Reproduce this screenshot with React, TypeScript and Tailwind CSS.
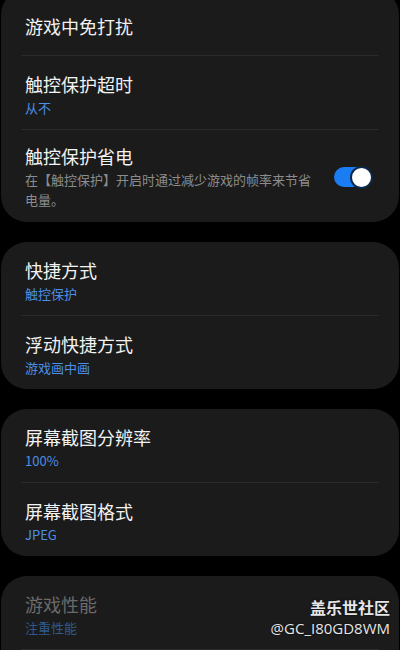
import React from 'react';

const font = { fontFamily: '"Noto Sans CJK SC", "Noto Sans", sans-serif' };

function Row({ title, sub, dim }: { title: string; sub: string; dim?: boolean }) {
  return (
    <div className="px-[24px] pt-[15px] pb-[12px]">
      <div className={`text-[18px] leading-[27px] ${dim ? 'text-[#6a6a6a]' : 'text-[#f2f2f2]'}`}>{title}</div>
      <div className={`text-[13px] leading-[19px] ${dim ? 'text-[#2f5a8c]' : 'text-[#4b8fe6]'}`}>{sub}</div>
    </div>
  );
}

function Divider() {
  return <div className="mx-[20px] h-px bg-[#2b2b2b]" />;
}

function Toggle() {
  return (
    <div className="relative w-[38px] h-[20px] rounded-full bg-[#1a7df3] shrink-0">
      <div className="absolute right-[-1px] top-[-1px] w-[23px] h-[23px] rounded-full bg-white border-[2px] border-[#0d2748]" />
    </div>
  );
}

export default function App() {
  return (
    <div className="relative w-[400px] h-[650px] overflow-hidden bg-black" style={font}>
      <div className="flex flex-col gap-[20px] px-[1px] -mt-[11px]">
        <div className="rounded-[26px] bg-[#1b1b1b]">
          <div className="px-[24px] pt-[24px] pb-[15px] text-[18px] leading-[27px] text-[#f2f2f2]">游戏中免打扰</div>
          <Divider />
          <Row title="触控保护超时" sub="从不" />
          <Divider />
          <div className="flex items-center gap-[16px] pl-[24px] pr-[27px] pt-[13px] pb-[12px]">
            <div className="flex-1">
              <div className="text-[18px] leading-[27px] text-[#f2f2f2]">触控保护省电</div>
              <div className="text-[13px] leading-[20px] text-[#8c8c8c]">在【触控保护】开启时通过减少游戏的帧率来节省电量。</div>
            </div>
            <Toggle />
          </div>
        </div>

        <div className="rounded-[26px] bg-[#1b1b1b]">
          <Row title="快捷方式" sub="触控保护" />
          <Divider />
          <Row title="浮动快捷方式" sub="游戏画中画" />
        </div>

        <div className="rounded-[26px] bg-[#1b1b1b]">
          <Row title="屏幕截图分辨率" sub="100%" />
          <Divider />
          <Row title="屏幕截图格式" sub="JPEG" />
        </div>

        <div className="rounded-[26px] bg-[#1b1b1b]">
          <Row title="游戏性能" sub="注重性能" dim />
          <Divider />
          <div className="h-[40px]" />
        </div>
      </div>

      <div className="absolute right-[10px] top-[596px] flex flex-col items-end text-[#e6e6e6] [text-shadow:0_0_2px_rgba(0,0,0,0.8)]">
        <div className="text-[16px] leading-[22px] font-bold">盖乐世社区</div>
        <div className="text-[15px] leading-[20px]" style={{ fontFamily: '"Open Sans", "Noto Sans", sans-serif' }}>@GC_I80GD8WM</div>
      </div>
    </div>
  );
}
